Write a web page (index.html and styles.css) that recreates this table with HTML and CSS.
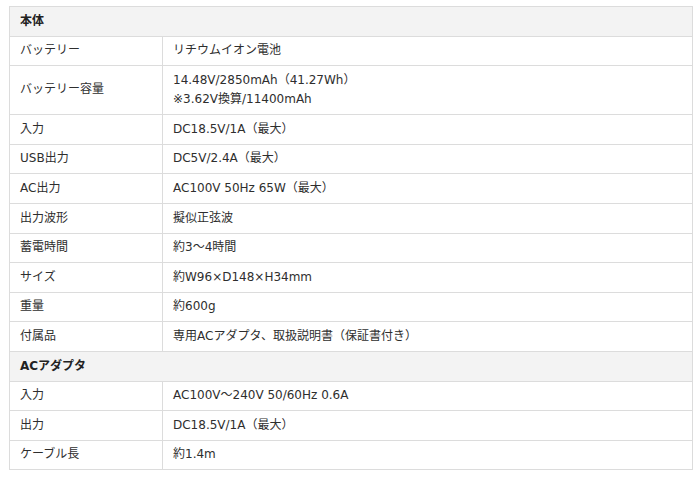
FILE: index.html
```html
<!DOCTYPE html>
<html lang="ja">
<head>
<meta charset="utf-8">
<title>仕様</title>
<link rel="stylesheet" href="styles.css">
</head>
<body>
<table class="spec">
  <colgroup>
    <col class="col-label">
    <col class="col-value">
  </colgroup>
  <tbody>
    <tr class="group"><th colspan="2">本体</th></tr>
    <tr><td>バッテリー</td><td>リチウムイオン電池</td></tr>
    <tr><td>バッテリー容量</td><td>14.48V/2850mAh（41.27Wh）<br>※3.62V換算/11400mAh</td></tr>
    <tr><td>入力</td><td>DC18.5V/1A（最大）</td></tr>
    <tr><td>USB出力</td><td>DC5V/2.4A（最大）</td></tr>
    <tr><td>AC出力</td><td>AC100V 50Hz 65W（最大）</td></tr>
    <tr><td>出力波形</td><td>擬似正弦波</td></tr>
    <tr><td>蓄電時間</td><td>約3～4時間</td></tr>
    <tr><td>サイズ</td><td>約W96×D148×H34mm</td></tr>
    <tr><td>重量</td><td>約600g</td></tr>
    <tr><td>付属品</td><td>専用ACアダプタ、取扱説明書（保証書付き）</td></tr>
    <tr class="group"><th colspan="2">ACアダプタ</th></tr>
    <tr><td>入力</td><td>AC100V～240V 50/60Hz 0.6A</td></tr>
    <tr><td>出力</td><td>DC18.5V/1A（最大）</td></tr>
    <tr><td>ケーブル長</td><td>約1.4m</td></tr>
  </tbody>
</table>
</body>
</html>
```

FILE: styles.css
```css
html, body {
  background: #ffffff;
}
body {
  margin: 6px 0 0 9px;
  font-family: "DejaVu Sans", "Noto Sans CJK JP", sans-serif;
  font-size: 12px;
  line-height: 19.5px;
  color: #2e2e2e;
}
.spec {
  width: 684px;
  border-collapse: collapse;
  table-layout: fixed;
}
.col-label {
  width: 153px;
}
.spec th,
.spec td {
  border: 1px solid #dcdcdc;
  padding: 4.55px 10px;
  text-align: left;
  vertical-align: middle;
  font-weight: normal;
}
.spec .group th {
  background: #f3f3f3;
  font-weight: bold;
  color: #222222;
}
```
